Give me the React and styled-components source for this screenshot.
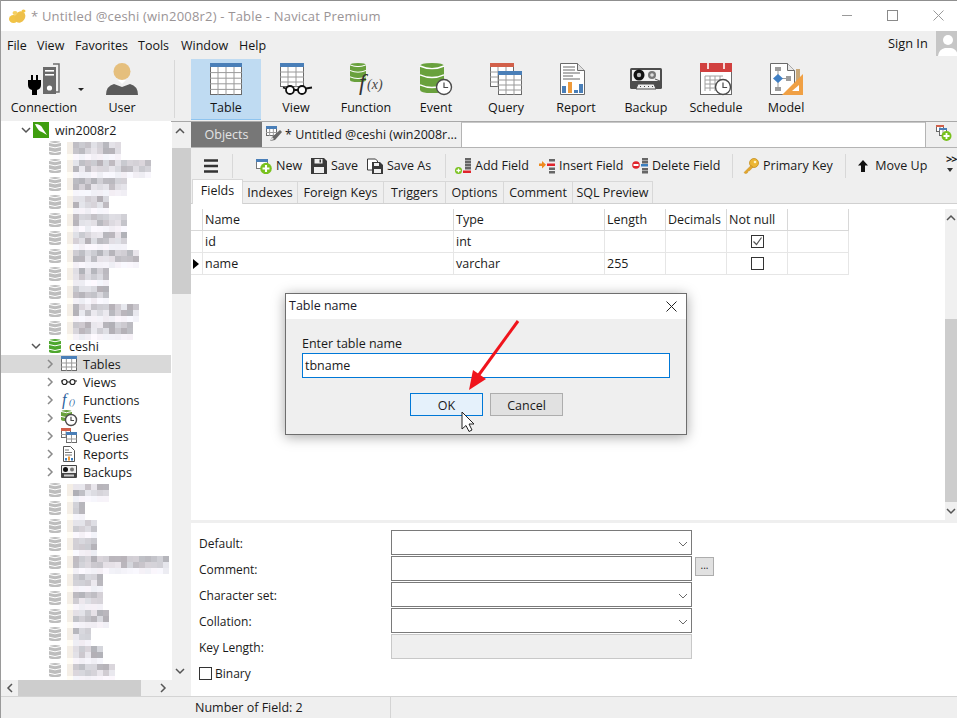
import React from 'react';
import styled, { createGlobalStyle } from 'styled-components';

const Global = createGlobalStyle`
  html, body { margin: 0; padding: 0; background: #fff; }
  body { font-family: "Open Sans", "Liberation Sans", sans-serif; font-size: 13px; color: #1a1a1a; }
  * { box-sizing: border-box; }
`;

const Win = styled.div`
  position: relative; width: 957px; height: 718px; overflow: hidden;
  display: flex; flex-direction: column; background: #fff;
  border-left: 1px solid #9a9a9a;
`;
const TitleBar = styled.div`
  height: 31px; flex: none; background: #fff; border-top: 1px solid #8f8f8f;
  margin-left: -1px; position: relative; display: flex; align-items: center; padding-left: 9px;
`;
const TitleText = styled.span`margin-left: 5px; font-size: 13px; color: #9a9496; letter-spacing: .2px;`;
const WinCtl = styled.svg`position: absolute; top: 8px; left: ${p => p.$x}px;`;
const MenuBar = styled.div`
  height: 28px; flex: none; background: #efefef; position: relative; display: flex; align-items: center; padding-left: 6px;
`;
const MenuItem = styled.span`width: ${p => p.$w}px; font-size: 12.5px; color: #141414;`;
const SignIn = styled.span`position: absolute; left: 887px; top: 3px; font-size: 12.8px; color: #141414;`;
const Avatar = styled.svg`position: absolute; left: 935px; top: 0;`;
const Toolbar = styled.div`
  height: 63px; flex: none; background: #efefef; border-bottom: 1px solid #a8a8a8; display: flex; padding-left: 8px;
`;
const ToolButton = styled.div`
  width: 70px; height: 61px; display: flex; flex-direction: column; align-items: stretch; flex: none;
  padding-top: 4px; text-align: center; font-size: 12.5px; color: #141414; position: relative;
  background: ${p => (p.$active ? '#bfdbf2' : 'transparent')};
  border-bottom: ${p => (p.$active ? '1px solid #8ec4ef' : '0')};
  svg { display: block; overflow: visible; }
`;
const ToolLabel = styled.span`margin-top: 4px; line-height: 18px;`;
const ToolGap = styled.div`width: ${p => p.$w}px; flex: none; position: relative;`;
const ToolSep = styled.div`width: 1px; height: 58px; margin: 1px 16px 0 17px; background: #d8d8d8; flex: none;`;

const Body = styled.div`flex: 1; display: flex; min-height: 0;`;
const Sidebar = styled.div`width: 190px; flex: none; display: flex; flex-direction: column; position: relative;`;
const TreeWrap = styled.div`height: 558px; flex: none; display: flex;`;
const Tree = styled.div`width: 170px; flex: none; overflow: hidden; background: #fff; padding-top: 0; margin-top: -1px;`;
const TreeRow = styled.div`
  height: 18px; display: flex; align-items: center; position: relative; font-size: 12.5px; color: #1a1a1a;
  background: ${p => (p.$sel ? '#d9d9d9' : 'transparent')};
  padding-left: ${p => p.$pad}px;
  svg { flex: none; overflow: visible; }
`;
const TreeLabel = styled.span`position: absolute; left: ${p => p.$x}px; top: 1px; line-height: 18px; white-space: nowrap;`;
const Mosaic = styled.svg`position: absolute; left: 66px; top: 0; overflow: visible;`;
const VScroll = styled.div`
  width: ${p => p.$w}px; flex: none; background: #f0f0f0; position: relative; height: ${p => p.$h}px;
`;
const VThumb = styled.div`position: absolute; left: 0; right: 0; top: ${p => p.$top}px; height: ${p => p.$h}px; background: #cdcdcd;`;
const Arrow = styled.svg`position: absolute; left: ${p => p.$x}px; top: ${p => p.$y}px;`;
const SideGap = styled.div`width: 1px; flex: none; background: #fff;`;
const HScroll = styled.div`height: 16px; flex: none; background: #f0f0f0; position: relative; margin-left: -1px;`;
const HThumb = styled.div`position: absolute; left: 18px; width: 123px; top: 0; bottom: 0; background: #cdcdcd;`;

const Main = styled.div`flex: 1; display: flex; flex-direction: column; min-width: 0; background: #fff; position: relative;`;
const TabStrip = styled.div`height: 26px; flex: none; display: flex; background: #efefef; border-bottom: 1px solid #b4b4b4;`;
const ObjectsTab = styled.div`
  width: 71px; height: 25px; background: #777; color: #e4e4e4; text-align: center; line-height: 25px; font-size: 12.5px;
`;
const DocTab = styled.div`
  width: 199px; display: flex; align-items: center; padding-left: 4px; gap: 2px; font-size: 12.5px; white-space: nowrap; overflow: hidden;
`;
const TabFill = styled.div`flex: 1; background: #fff; border-left: 1px solid #b4b4b4; border-top: 1px solid #c8c8c8; height: 25px;`;
const TabAdd = styled.div`width: 32px; flex: none; border-left: 1px solid #b4b4b4; padding: 3px 0 0 10px;`;
const ActionBar = styled.div`
  height: 33px; flex: none; background: #efefef; display: flex; align-items: center; position: relative; font-size: 12.5px; padding-top: 2px;
`;
const ActionItem = styled.div`
  width: ${p => p.$w}px; margin-left: ${p => p.$ml || 0}px; flex: none; display: flex; align-items: center; gap: 4px; white-space: nowrap;
  svg { flex: none; }
`;
const ActionSep = styled.div`width: 1px; height: 24px; background: #d8d8d8; flex: none; margin: 0 ${p => p.$r}px 0 ${p => p.$l}px;`;
const Overflow = styled.div`position: absolute; left: 755px; top: 5px; font-size: 11px; font-weight: 700; line-height: 11px; letter-spacing: -1px;`;
const FieldTabs = styled.div`
  height: 23px; flex: none; background: #efefef; display: flex; border-bottom: 1px solid #d0d0d0; padding-left: 1px; position: relative;
`;
const FieldTab = styled.div`
  width: ${p => p.$w}px; flex: none; text-align: center; font-size: 12.5px; color: #1a1a1a;
  ${p => p.$active
    ? 'background:#fff; height:25px; margin-top:-2px; line-height:21px; border:1px solid #d8d8d8; border-bottom:0; position:relative; z-index:1;'
    : 'height:22px; line-height:22px; border-right:1px solid #d8d8d8; border-top:1px solid #d8d8d8;'}
`;
const GridArea = styled.div`height: 316px; flex: none; position: relative; padding-top: 5px; background: #fff;`;
const GridRow = styled.div`
  display: grid; grid-template-columns: 12px 251px 151px 61px 61px 61px 61px; width: 658px;
  height: 22px; border-bottom: 1px solid ${p => (p.$head ? '#d8d8d8' : '#e6e6e6')};
`;
const GridCell = styled.div`
  border-right: 1px solid ${p => (p.$head ? '#d8d8d8' : '#e6e6e6')}; padding-left: ${p => (p.$center ? 0 : 2)}px; line-height: 21px; font-size: 12.5px; color: #1a1a1a;
  display: flex; align-items: center; justify-content: ${p => (p.$center ? 'center' : 'flex-start')};
`;
const Check = styled.div`
  width: 13px; height: 13px; border: 1px solid #333; background: #fff; display: flex; align-items: center; justify-content: center;
`;
const Indicator = styled.div`
  width: 0; height: 0; border-left: 6px solid #000; border-top: 5px solid transparent; border-bottom: 5px solid transparent;
`;
const GridScroll = styled.div`position: absolute; right: 0; top: 5px; bottom: 0; width: 12px; background: #f0f0f0;`;
const Splitter = styled.div`height: 3px; flex: none; background: #efefef;`;
const Props = styled.div`
  flex: 1; background: #fff; position: relative; display: flex; flex-direction: column; padding: 7px 0 0 8px;
`;
const PropRow = styled.div`height: 26px; flex: none; display: flex; align-items: flex-start; position: relative; font-size: 12px;`;
const PropLabel = styled.div`width: 192px; flex: none; line-height: 27px; color: #1a1a1a;`;
const PropField = styled.div`
  width: 301px; height: 25px; flex: none; position: relative;
  border: 1px solid ${p => (p.$off ? '#c8c8c8' : '#7a7a7a')};
  background: ${p => (p.$off ? '#efefef' : '#fff')};
  svg { position: absolute; right: 3px; top: 8px; }
`;
const Dots = styled.div`
  width: 19px; height: 19px; flex: none; margin: 1px 0 0 3px; background: #e1e1e1; border: 1px solid #adadad; text-align: center; font-size: 10px; line-height: 15px;
`;
const BinaryBox = styled.div`width: 13px; height: 13px; border: 1px solid #333; background: #fff; margin: 7px 3px 0 0; flex: none;`;
const Status = styled.div`
  height: 22px; flex: none; background: #efefef; border-top: 1px solid #d4d4d4; display: flex; font-size: 12.5px;
`;
const StatusCell = styled.div`width: 390px; flex: none; border-right: 1px solid #d4d4d4; padding-left: 194px; line-height: 21px;`;

const Dialog = styled.div`
  position: absolute; left: 284px; top: 293px; width: 402px; height: 142px; background: #efefef;
  border: 1px solid #6e6e6e; box-shadow: 0 2px 12px rgba(0,0,0,.35); display: flex; flex-direction: column;
`;
const DialogTitle = styled.div`
  height: 25px; flex: none; background: #fff; padding-left: 3px; line-height: 24px; font-size: 12.5px; color: #1a1a2a; position: relative;
  svg { position: absolute; right: 9px; top: 7px; }
`;
const DialogLabel = styled.div`margin: 16px 0 0 16px; font-size: 12.5px; line-height: 17px; color: #1a1a1a;`;
const DialogInput = styled.div`
  margin: 1px 0 0 16px; width: 368px; height: 25px; border: 1px solid #0078d7; background: #fff; padding-left: 2px; line-height: 23px; font-size: 12.5px;
`;
const DialogButtons = styled.div`display: flex; gap: 7px; margin: 15px 0 0 124px;`;
const DialogButton = styled.div`
  width: 73px; height: 23px; text-align: center; line-height: 23px; font-size: 12.5px;
  border: 1px solid ${p => (p.$primary ? '#0078d7' : '#adadad')};
  background: ${p => (p.$primary ? '#e5f1fb' : '#e1e1e1')};
`;
const Overlay = styled.svg`position: absolute; left: 0; top: 0; pointer-events: none;`;

/* ---- icons ---- */
const GridGlyph = ({ x, y, w, h, head = '#4a7fb8', cols = 4, rows = 4, top = 4 }) => {
  const lines = [];
  for (let i = 1; i < cols; i++) { const cx = x + (w * i) / cols; lines.push(<line key={'c' + i} x1={cx} x2={cx} y1={y + top} y2={y + h} stroke="#9a9a9a" />); }
  for (let i = 1; i < rows; i++) { const cy = y + top + ((h - top) * i) / rows; lines.push(<line key={'r' + i} x1={x} x2={x + w} y1={cy} y2={cy} stroke="#9a9a9a" />); }
  return (
    <g>
      <rect x={x + .5} y={y + .5} width={w - 1} height={h - 1} fill="#fff" stroke="#6a6a6a" />
      {lines}
      <rect x={x} y={y} width={w} height={top} fill={head} />
    </g>
  );
};
const Db = ({ x, y, w, h, c = '#69a13d', n = 3 }) => {
  const seg = h / n; const dip = Math.max(1.6, h / 9); const arcs = [];
  for (let i = 0; i < n; i++) {
    const sy = y + seg * i + dip * (i === 0 ? .9 : .55);
    arcs.push(<path key={i} d={`M${x} ${sy} Q${x + w / 2} ${sy + dip * 1.6} ${x + w} ${sy}`} stroke="#fff" strokeWidth={h > 20 ? 1.4 : 1} fill="none" />);
  }
  return (
    <g>
      <path d={`M${x} ${y + dip} Q${x} ${y} ${x + w / 2} ${y} Q${x + w} ${y} ${x + w} ${y + dip} V${y + h - dip} Q${x + w} ${y + h} ${x + w / 2} ${y + h} Q${x} ${y + h} ${x} ${y + h - dip}Z`} fill={c} />
      {arcs}
    </g>
  );
};
const Clock = ({ cx, cy, r }) => (
  <g>
    <circle cx={cx} cy={cy} r={r} fill="#fff" stroke="#4a4a4a" strokeWidth="1.4" />
    <path d={`M${cx} ${cy - r * .6} V${cy + .5} H${cx + r * .55}`} fill="none" stroke="#4a4a4a" strokeWidth="1.2" />
  </g>
);
const Svg70 = ({ children }) => <svg width="70" height="32" viewBox="0 0 70 32">{children}</svg>;

const icons = {
  Connection: (
    <Svg70>
      <path d="M23 12v5M28 12v5" stroke="#000" strokeWidth="2" />
      <path d="M19 17h13v5q0 4-4 5v5h-5v-5q-4-1-4-5z" fill="#000" />
      <path d="M44 1h6v28h-4" fill="none" stroke="#6f6f6f" strokeWidth="1.5" />
      <rect x="34" y="4" width="13" height="27" fill="#6a6a6a" />
      <rect x="36" y="7" width="9" height="1.6" fill="#fff" /><rect x="36" y="11" width="9" height="1.6" fill="#fff" />
      <circle cx="40.5" cy="25" r="2.6" fill="#fff" />
      <path d="M69 25h6l-3 3z" fill="#222" />
    </Svg70>
  ),
  User: (
    <Svg70>
      <circle cx="35" cy="8.5" r="8.5" fill="#e5bf7d" />
      <path d="M31 17h8l-4 4z" fill="#fff" />
      <path d="M19 32q0-9 8-11l8 3 8-3q8 2 8 11z" fill="#5a5a5a" />
    </Svg70>
  ),
  Table: <Svg70><GridGlyph x={19} y={0} w={32} h={32} cols={4} rows={5} /></Svg70>,
  View: (
    <Svg70>
      <GridGlyph x={19} y={0} w={24} h={24} cols={3} rows={4} />
      <circle cx="29" cy="27" r="4" fill="#fff" stroke="#111" strokeWidth="1.8" />
      <circle cx="41" cy="27" r="4" fill="#fff" stroke="#111" strokeWidth="1.8" />
      <path d="M22 24.5l3 1M33 27h4M45 25.5l6-1" stroke="#111" strokeWidth="1.8" />
    </Svg70>
  ),
  Function: (
    <Svg70>
      <Db x={19} y={0} w={16} h={19} />
      <text x="28" y="27" fontFamily="Liberation Serif, serif" fontStyle="italic" fontSize="23" fill="#333">f</text>
      <text x="36" y="26" fontFamily="Liberation Serif, serif" fontStyle="italic" fontSize="14" fill="#444">(x)</text>
    </Svg70>
  ),
  Event: <Svg70><Db x={19} y={0} w={24} h={30} /><Clock cx={43} cy={24} r={7.5} /></Svg70>,
  Query: <Svg70><GridGlyph x={19} y={0} w={24} h={24} head="#d2604a" cols={3} rows={4} /><GridGlyph x={27} y={8} w={24} h={24} cols={3} rows={4} /></Svg70>,
  Report: (
    <Svg70>
      <path d="M19.5.5h17l7 7v24h-24z" fill="#fff" stroke="#6a6a6a" />
      <path d="M36.5.5v7h7" fill="#e0e0e0" stroke="#6a6a6a" />
      <path d="M22 4h12M22 7h12M22 10h17M22 13h10M22 16h17" stroke="#666" />
      <rect x="21" y="23" width="4" height="7" fill="#4a7fb8" /><rect x="27" y="19" width="4" height="11" fill="#ee9a3a" />
      <rect x="33" y="27" width="4" height="3" fill="#4a7fb8" /><rect x="38" y="21" width="4" height="9" fill="#4a7fb8" />
    </Svg70>
  ),
  Backup: (
    <Svg70>
      <rect x="19" y="5" width="32" height="21" rx="1.5" fill="#4d4d4d" />
      <rect x="21" y="7" width="28" height="11" fill="#efefef" />
      <circle cx="28" cy="12" r="5.5" fill="#111" /><circle cx="28" cy="12" r="2.2" fill="#bbb" />
      <circle cx="41" cy="12" r="4" fill="#777" /><circle cx="41" cy="12" r="1.8" fill="#ddd" />
      <path d="M44 16l5 2" stroke="#555" />
      <path d="M25 26l2-5h16l2 5z" fill="#efefef" stroke="#4d4d4d" />
      <path d="M29 23.5h1M33 23.5h1M37 23.5h1M41 23.5h1" stroke="#444" />
    </Svg70>
  ),
  Schedule: (
    <Svg70>
      <rect x="19.5" y=".5" width="31" height="31" fill="#fff" stroke="#6a6a6a" />
      <rect x="19" y="0" width="32" height="9" fill="#d1403f" />
      <path d="M27 0v6M43 0v6" stroke="#fff" strokeWidth="1.6" />
      <g stroke="#a0a0a0"><path d="M24 13h18M24 17h18M24 21h18M24 25h18M24 13v15M29 13v15M34 13v15M39 13v15" /></g>
      <Clock cx={42} cy={24} r={7.5} />
    </Svg70>
  ),
  Model: (
    <Svg70>
      <path d="M19.5.5h17l7 7v24h-24z" fill="#fff" stroke="#6a6a6a" />
      <path d="M36.5.5v7h7" fill="#e8e8e8" stroke="#6a6a6a" />
      <rect x="24" y="4" width="6" height="4" fill="#9c9c9c" /><rect x="24" y="24" width="6" height="4" fill="#9c9c9c" />
      <rect x="35" y="13" width="5" height="5" fill="#9c9c9c" />
      <path d="M27 8v16M27 15.5h8" stroke="#9c9c9c" />
      <path d="M27 11l5 4.500-5 4.500-5-4.500z" fill="#3f7fc4" />
      <rect x="45" y="6" width="4" height="18" fill="#c9a878" />
      <path d="M52 11v21h-21z" fill="#f0a044" /><path d="M48 22v6h-7z" fill="#fff" />
    </Svg70>
  ),
};

const Small = ({ children, w = 16, h = 16 }) => <svg width={w} height={h} viewBox={`0 0 ${w} ${h}`}>{children}</svg>;
const Plus = ({ cx, cy, r }) => (
  <g>
    <circle cx={cx} cy={cy} r={r} fill="#79c11e" />
    <path d={`M${cx - r * .6} ${cy}h${r * 1.2}M${cx} ${cy - r * .6}v${r * 1.2}`} stroke="#fff" strokeWidth={r * .36} />
  </g>
);
const NewIco = () => (
  <Small>
    <rect x=".5" y="1.5" width="11" height="9" fill="#fff" stroke="#777" />
    <rect x="0" y="1" width="12" height="3" fill="#4a7fb8" />
    <Plus cx={10} cy={10.500} r={5.800} />
  </Small>
);
const SaveIco = () => (
  <Small>
    <path d="M0 0h13l3 3v13H0z" fill="#3a3a3a" />
    <rect x="3.500" y="1" width="8" height="4.500" fill="#efefef" /><rect x="3" y="9" width="10" height="6" fill="#efefef" />
    <rect x="8.500" y="1.500" width="1.500" height="3" fill="#3a3a3a" />
  </Small>
);
const SaveAsIco = () => (
  <Small>
    <path d="M.5 1h8l2 2v9h-10z" fill="#fff" stroke="#3a3a3a" />
    <path d="M5 4h8l3 3v9H5z" fill="#3a3a3a" />
    <rect x="7" y="5" width="5" height="3" fill="#efefef" /><rect x="7" y="11" width="7" height="4" fill="#efefef" />
  </Small>
);
const Rows = ({ x, c1 = '#666', y = [1, 5, 9] }) => y.map(v => <rect key={v} x={x} y={v} width="6" height="2.500" fill={c1} />);
const AddIco = () => (
  <Small>
    <Rows x={10} y={[0, 3, 6, 9]} />
    <rect x="8" y="12.500" width="8" height="2.500" fill="#e0242c" />
    <Plus cx={3.500} cy={12.500} r={3.500} />
  </Small>
);
const InsertIco = () => (
  <Small>
    <rect x="10" y="1" width="6" height="2.500" fill="#666" /><rect x="10" y="9.500" width="6" height="2.500" fill="#666" /><rect x="10" y="13" width="6" height="2.500" fill="#666" />
    <rect x="8" y="5.500" width="8" height="2.500" fill="#e0242c" />
    <path d="M0 5.500h3V3l4 3.800-4 3.800V8H0z" fill="#ee8a1e" />
  </Small>
);
const DeleteIco = () => (
  <Small>
    <Rows x={10} y={[0, 3, 10, 13]} />
    <rect x="9" y="6" width="7" height="2.500" fill="#3b7fc0" />
    <circle cx="4" cy="7" r="3.800" fill="#e0242c" /><rect x="1.500" y="6" width="5" height="2" fill="#fff" />
  </Small>
);
const KeyIco = () => (
  <Small>
    <circle cx="11" cy="5" r="4.500" fill="#edb735" stroke="#c48d1e" strokeWidth=".8" />
    <circle cx="12" cy="4" r="1.300" fill="#fff4c8" />
    <path d="M8 7.500L1 14.500l1.500 1.300 2-1 .5-1.800 1.800-.4L10 9z" fill="#e3a62c" stroke="#c48d1e" strokeWidth=".5" />
  </Small>
);
const UpIco = () => <svg width="10" height="16" viewBox="0 0 10 16"><path d="M5 2l5 5.500H7V14H3V7.500H0z" fill="#111" /></svg>;

const Chev = ({ dir = 'down', c = '#666', s = 10, sw = 1.5 }) => {
  const d = { down: 'M1 3l4 4 4-4', up: 'M1 7l4-4 4 4', right: 'M3 1l4 4-4 4', left: 'M7 1L3 5l4 4' }[dir];
  return <svg width={s} height={s} viewBox="0 0 10 10"><path d={d} fill="none" stroke={c} strokeWidth={sw} /></svg>;
};
const TreeDb = ({ c = '#bdbdbd' }) => <svg width="12" height="14" viewBox="0 0 12 14"><Db x={0} y={0} w={12} h={14} c={c} /></svg>;

const rng = s => { let v = s * 7919 + 13; return () => { v = (v * 16807) % 2147483647; return (v % 1000) / 1000; }; };
const MosaicRow = ({ seed, w }) => {
  const r = rng(seed); const cells = []; const n = Math.round(w / 6);
  for (let row = 0; row < 3; row++) {
    for (let i = 0; i < n; i++) {
      const t = r();
      let g = row === 2 ? 238 + t * 14 : 178 + t * 58;
      if (i === 0) g = row === 2 ? 250 : 236;
      const tint = i === 0 ? [8, 2, -6] : [Math.round(r() * 6) - 3, -2, 4];
      cells.push(<rect key={row + '-' + i} x={i * 6} y={row * 6 + 3} width="6" height="6" fill={`rgb(${Math.min(255, g + tint[0])},${Math.min(255, g + tint[1])},${Math.min(255, g + tint[2])})`} />);
    }
  }
  return <Mosaic width={w} height="18" shapeRendering="crispEdges">{cells}</Mosaic>;
};

const topDbs = [56, 86, 62, 44, 62, 62, 72, 44, 44, 74, 68];
const botDbs = [42, 18, 30, 30, 102, 36, 36, 42, 24, 36, 48];

const children = [
  ['Tables', <svg key="a" width="16" height="16" viewBox="0 0 16 16"><GridGlyph x={0} y={0} w={16} h={15} cols={3} rows={3} top={3} /></svg>],
  ['Views', <svg key="b" width="16" height="16" viewBox="0 0 16 16"><circle cx="3.500" cy="8" r="2.500" fill="none" stroke="#222" strokeWidth="1.200" /><circle cx="11.500" cy="8" r="2.500" fill="none" stroke="#222" strokeWidth="1.200" /><path d="M6 8h3M0 7h1M14 7h2" stroke="#222" /></svg>],
  ['Functions', <svg key="c" width="16" height="16" viewBox="0 0 16 16"><text x="1" y="13" fontFamily="Liberation Serif, serif" fontStyle="italic" fontSize="16" fill="#2b5f9e">f</text><text x="8" y="13" fontFamily="Liberation Serif, serif" fontStyle="italic" fontSize="9" fill="#2b5f9e">()</text></svg>],
  ['Events', <svg key="d" width="16" height="16" viewBox="0 0 16 16"><Db x={0} y={0} w={11} h={11} n={2} /><Clock cx={10} cy={10} r={5.500} /></svg>],
  ['Queries', <svg key="e" width="16" height="16" viewBox="0 0 16 16"><GridGlyph x={0} y={0} w={10} h={10} head="#d2604a" cols={2} rows={2} top={3} /><GridGlyph x={5} y={4} w={11} h={11} cols={2} rows={2} top={3} /></svg>],
  ['Reports', <svg key="f" width="16" height="16" viewBox="0 0 16 16"><path d="M2.500.5h7l4 4v11h-11z" fill="#fff" stroke="#555" /><path d="M4 4h4M4 6.500h7M4 9h7" stroke="#777" /><rect x="4" y="12" width="2" height="2.500" fill="#3b7fc0" /><rect x="7" y="10.500" width="2" height="4" fill="#ee9a3a" /><rect x="10" y="12" width="2" height="2.500" fill="#3b7fc0" /></svg>],
  ['Backups', <svg key="g" width="16" height="16" viewBox="0 0 16 16"><rect x="0" y="1" width="16" height="13" rx="1" fill="#444" /><rect x="1" y="2" width="14" height="7" fill="#eee" /><circle cx="4.500" cy="5.500" r="2.500" fill="#111" /><circle cx="11" cy="5.500" r="2" fill="#777" /><rect x="3" y="10.500" width="10" height="2" fill="#ccc" /></svg>],
];

const toolsA = ['Connection', 'User'];
const toolsB = ['Table', 'View', 'Function', 'Event', 'Query', 'Report', 'Backup', 'Schedule', 'Model'];
const fieldTabs = [['Indexes', 55], ['Foreign Keys', 86], ['Triggers', 62], ['Options', 58], ['Comment', 69], ['SQL Preview', 80]];
const Dn = () => <Chev dir="down" c="#6a6a6a" s={10} sw={1} />;

export default function App() {
  return (
    <Win>
      <Global />
      <TitleBar>
        <svg width="17" height="15" viewBox="0 0 17 15">
          <ellipse cx="4.500" cy="10" rx="4.500" ry="4" fill="#f2c445" />
          <ellipse cx="11" cy="8" rx="5" ry="6" fill="#eec04a" transform="rotate(35 11 8)" />
          <ellipse cx="6" cy="4" rx="2.500" ry="2" fill="#f5cf60" />
          <ellipse cx="14.500" cy="2" rx="2" ry="1.500" fill="#f2c445" />
        </svg>
        <TitleText>* Untitled @ceshi (win2008r2) - Table - Navicat Premium</TitleText>
        <WinCtl $x={842} width="11" height="12"><path d="M0 6.500h10" stroke="#9a9a9a" /></WinCtl>
        <WinCtl $x={887} width="11" height="12"><rect x=".5" y="1.500" width="10" height="10" fill="none" stroke="#8a8a8a" /></WinCtl>
        <WinCtl $x={933} width="11" height="12"><path d="M.5 1.500l10 10M10.500 1.500l-10 10" stroke="#9a9a9a" /></WinCtl>
      </TitleBar>
      <MenuBar>
        {[['File', 30], ['View', 38], ['Favorites', 63], ['Tools', 43], ['Window', 58], ['Help', 40]].map(([t, w]) => <MenuItem key={t} $w={w}>{t}</MenuItem>)}
        <SignIn>Sign In</SignIn>
        <Avatar width="22" height="25" viewBox="0 0 22 25">
          <rect width="22" height="25" fill="#c6c6c6" />
          <circle cx="12" cy="9" r="5" fill="#fff" />
          <path d="M2 25q1-7 7-8h6q6 1 7 8z" fill="#fff" />
        </Avatar>
      </MenuBar>
      <Toolbar>
        {toolsA.map(t => (
          <React.Fragment key={t}>
            <ToolButton>{icons[t]}<ToolLabel>{t}</ToolLabel></ToolButton>
            {t === 'Connection' && <ToolGap $w={8} />}
          </React.Fragment>
        ))}
        <ToolSep />
        {toolsB.map(t => (
          <ToolButton key={t} $active={t === 'Table'}>{icons[t]}<ToolLabel>{t}</ToolLabel></ToolButton>
        ))}
      </Toolbar>
      <Body>
        <Sidebar>
          <TreeWrap>
            <Tree>
              <TreeRow $pad={20}>
                <Chev c="#555" />
                <svg style={{ marginLeft: 2 }} width="16" height="16" viewBox="0 0 16 16">
                  <rect width="16" height="16" fill="#3f9e0f" />
                  <path d="M2 2q6 0 8 5l4 6-5-3Q5 9 2 2z" fill="#fff" />
                </svg>
                <TreeLabel $x={54}>win2008r2</TreeLabel>
              </TreeRow>
              {topDbs.map((w, i) => <TreeRow key={i} $pad={48}><TreeDb /><MosaicRow seed={i + 1} w={w} /></TreeRow>)}
              <TreeRow $pad={30}>
                <Chev c="#555" />
                <svg style={{ marginLeft: 8 }} width="12" height="14" viewBox="0 0 12 14"><Db x={0} y={0} w={12} h={14} c="#4ea72e" /></svg>
                <TreeLabel $x={68}>ceshi</TreeLabel>
              </TreeRow>
              {children.map(([t, ic]) => (
                <TreeRow key={t} $pad={44} $sel={t === 'Tables'}>
                  <Chev dir="right" c="#8a8a8a" />
                  <span style={{ width: 6 }} />
                  {ic}
                  <TreeLabel $x={82}>{t}</TreeLabel>
                </TreeRow>
              ))}
              {botDbs.map((w, i) => <TreeRow key={i} $pad={48}><TreeDb /><MosaicRow seed={i + 40} w={w} /></TreeRow>)}
            </Tree>
            <SideGap />
            <VScroll $w={19} $h={558}>
              <VThumb $top={26} $h={146} />
              <Arrow $x={3} $y={4} width="10" height="10" viewBox="0 0 10 10"><path d="M1 7l4-4 4 4" fill="none" stroke="#555" strokeWidth="1.500" /></Arrow>
              <Arrow $x={3} $y={544} width="10" height="10" viewBox="0 0 10 10"><path d="M1 3l4 4 4-4" fill="none" stroke="#555" strokeWidth="1.500" /></Arrow>
            </VScroll>
          </TreeWrap>
          <HScroll>
            <HThumb />
            <Arrow $x={5} $y={3} width="10" height="10" viewBox="0 0 10 10"><path d="M7 1L3 5l4 4" fill="none" stroke="#555" strokeWidth="1.500" /></Arrow>
            <Arrow $x={158} $y={3} width="10" height="10" viewBox="0 0 10 10"><path d="M3 1l4 4-4 4" fill="none" stroke="#555" strokeWidth="1.500" /></Arrow>
          </HScroll>
        </Sidebar>
        <Main>
          <TabStrip>
            <ObjectsTab>Objects</ObjectsTab>
            <DocTab>
              <svg width="17" height="17" viewBox="0 0 17 17">
                <GridGlyph x={0} y={0} w={11} h={10} head="#4a7fb8" cols={3} rows={2} top={3} />
                <path d="M4 15l2-4 8-7 2 2-7 8z" fill="#666" /><path d="M4 15l2-4 2 2z" fill="#ddd" />
              </svg>
              * Untitled @ceshi (win2008r...
            </DocTab>
            <TabFill />
            <TabAdd>
              <svg width="16" height="17" viewBox="0 0 16 17">
                <GridGlyph x={0} y={0} w={8} h={7} head="#d2604a" cols={2} rows={1} top={2} />
                <GridGlyph x={3} y={3} w={8} h={8} cols={2} rows={1} top={2} />
                <Plus cx={10.500} cy={11} r={5} />
              </svg>
            </TabAdd>
          </TabStrip>
          <ActionBar>
            <svg style={{ marginLeft: 13, flex: 'none' }} width="14" height="14" viewBox="0 0 14 14"><path d="M0 1.500h14M0 7h14M0 12.500h14" stroke="#333" strokeWidth="2.600" /></svg>
            <ActionSep $l={14} $r={23} />
            <ActionItem $w={55}><NewIco />New</ActionItem>
            <ActionItem $w={56}><SaveIco />Save</ActionItem>
            <ActionItem $w={78}><SaveAsIco />Save As</ActionItem>
            <ActionSep $l={0} $r={9} />
            <ActionItem $w={84}><AddIco />Add Field</ActionItem>
            <ActionItem $w={93}><InsertIco />Insert Field</ActionItem>
            <ActionItem $w={100}><DeleteIco />Delete Field</ActionItem>
            <ActionSep $l={0} $r={10} />
            <ActionItem $w={102}><KeyIco />Primary Key</ActionItem>
            <ActionSep $l={0} $r={12} />
            <ActionItem $w={80}><UpIco />&nbsp;Move Up</ActionItem>
            <Overflow>
              &gt;&gt;
              <svg style={{ display: 'block', margin: '4px 0 0 1px' }} width="6" height="4" viewBox="0 0 6 4"><path d="M0 0h6L3 4z" fill="#333" /></svg>
            </Overflow>
          </ActionBar>
          <FieldTabs>
            <FieldTab $active $w={51}>Fields</FieldTab>
            {fieldTabs.map(([t, w]) => <FieldTab key={t} $w={w}>{t}</FieldTab>)}
          </FieldTabs>
          <GridArea>
            <GridRow $head>
              {['', 'Name', 'Type', 'Length', 'Decimals', 'Not null', ''].map((t, i) => <GridCell $head key={i}>{t}</GridCell>)}
            </GridRow>
            <GridRow>
              <GridCell /><GridCell>id</GridCell><GridCell>int</GridCell><GridCell /><GridCell />
              <GridCell $center>
                <Check><svg width="11" height="11" viewBox="0 0 11 11"><path d="M1.500 5.500l3 3 5-7" fill="none" stroke="#555" strokeWidth="1.200" /></svg></Check>
              </GridCell>
              <GridCell />
            </GridRow>
            <GridRow>
              <GridCell><Indicator /></GridCell><GridCell>name</GridCell><GridCell>varchar</GridCell><GridCell>255</GridCell><GridCell />
              <GridCell $center><Check /></GridCell>
              <GridCell />
            </GridRow>
            <GridScroll>
              <VThumb $top={110} $h={183} />
              <Arrow $x={1} $y={4} width="10" height="10" viewBox="0 0 10 10"><path d="M1 7l4-4 4 4" fill="none" stroke="#555" strokeWidth="1.500" /></Arrow>
              <Arrow $x={1} $y={297} width="10" height="10" viewBox="0 0 10 10"><path d="M1 3l4 4 4-4" fill="none" stroke="#555" strokeWidth="1.500" /></Arrow>
            </GridScroll>
          </GridArea>
          <Splitter />
          <Props>
            <PropRow><PropLabel>Default:</PropLabel><PropField><Dn /></PropField></PropRow>
            <PropRow><PropLabel>Comment:</PropLabel><PropField /><Dots>...</Dots></PropRow>
            <PropRow><PropLabel>Character set:</PropLabel><PropField><Dn /></PropField></PropRow>
            <PropRow><PropLabel>Collation:</PropLabel><PropField><Dn /></PropField></PropRow>
            <PropRow><PropLabel>Key Length:</PropLabel><PropField $off /></PropRow>
            <PropRow><BinaryBox /><PropLabel>Binary</PropLabel></PropRow>
          </Props>
        </Main>
      </Body>
      <Status><StatusCell>Number of Field: 2</StatusCell></Status>
      <Dialog>
        <DialogTitle>
          Table name
          <svg width="11" height="11" viewBox="0 0 11 11"><path d="M.5.5l10 10M10.500.5l-10 10" stroke="#222" /></svg>
        </DialogTitle>
        <DialogLabel>Enter table name</DialogLabel>
        <DialogInput>tbname</DialogInput>
        <DialogButtons>
          <DialogButton $primary>OK</DialogButton>
          <DialogButton>Cancel</DialogButton>
        </DialogButtons>
      </Dialog>
      <Overlay width="957" height="718" viewBox="0 0 957 718">
        <path d="M517 321L477 376" stroke="#f0141c" strokeWidth="3" />
        <path d="M468 390l4-20 13 9z" fill="#f0141c" />
        <path d="M461 412v17l4-3.500 3 6 3-1.500-3-6h5z" fill="#fff" stroke="#222" strokeWidth="1" />
      </Overlay>
    </Win>
  );
}
